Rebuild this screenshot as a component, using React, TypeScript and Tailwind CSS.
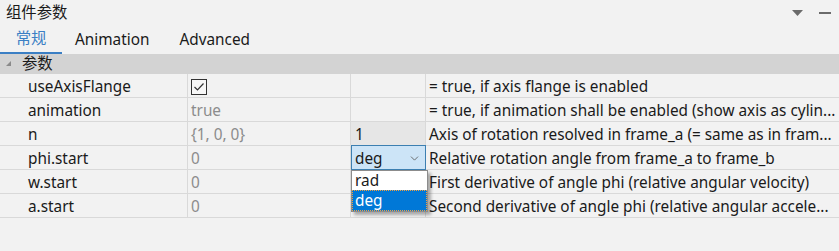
import { ChevronDown } from 'lucide-react'

type Row = {
  name: string
  value?: string
  unit?: string
  desc: string
  check?: boolean
  unitBg?: boolean
  dropdown?: boolean
}

const ROWS: Row[] = [
  { name: 'useAxisFlange', check: true, desc: '= true, if axis flange is enabled' },
  { name: 'animation', value: 'true', desc: '= true, if animation shall be enabled (show axis as cylin...' },
  { name: 'n', value: '{1, 0, 0}', unit: '1', unitBg: true, desc: 'Axis of rotation resolved in frame_a (= same as in fram...' },
  { name: 'phi.start', value: '0', unit: 'deg', dropdown: true, desc: 'Relative rotation angle from frame_a to frame_b' },
  { name: 'w.start', value: '0', desc: 'First derivative of angle phi (relative angular velocity)' },
  { name: 'a.start', value: '0', unit: 'rad/s2', desc: 'Second derivative of angle phi (relative angular accele...' },
]

function CheckBox() {
  return (
    <div className="flex h-[16px] w-[16px] items-center justify-center border border-[#333333] bg-[#f7f7f7]">
      <svg width="12" height="10" viewBox="0 0 12 10">
        <path d="M1.5 5 L4.5 8 L10.5 1.5" fill="none" stroke="#333333" strokeWidth="1.2" />
      </svg>
    </div>
  )
}

export default function App() {
  return (
    <div
      className="relative h-[251px] w-[839px] overflow-hidden bg-[#f2f2f2] text-[15.35px] text-[#1a1a1a]"
      style={{ fontFamily: '"Noto Sans", "Noto Sans CJK SC", sans-serif' }}
    >
      {/* title bar */}
      <div className="flex h-[25px] items-center justify-between pl-[6px] pr-[8px]">
        <span className="leading-none">组件参数</span>
        <div className="flex items-center gap-[16px] pt-[1px]">
          <svg width="11" height="6" viewBox="0 0 11 6">
            <path d="M0 0 H11 L5.5 6 Z" fill="#6b6b6b" />
          </svg>
          <div className="h-[2px] w-[12px] bg-[#6b6b6b]" />
        </div>
      </div>

      {/* tabs */}
      <div className="flex h-[29px] items-stretch">
        <div className="flex w-[62px] items-center justify-center border-b-[2px] border-[#3b7fc4] text-[#3b7fc4]">
          常规
        </div>
        <div className="flex items-center pl-[13px]">Animation</div>
        <div className="flex items-center pl-[30px]">Advanced</div>
      </div>

      {/* group row */}
      <div className="flex h-[20px] items-center bg-[#d3d3d3]">
        <svg className="ml-[5px]" width="7" height="6" viewBox="0 0 7 6">
          <path d="M6 0 L6 5 L1 5 Z" fill="#8a8a8a" />
        </svg>
        <span className="ml-[10px] leading-none">参数</span>
      </div>

      {/* property rows */}
      <div>
        {ROWS.map((r) => (
          <div
            key={r.name}
            className="grid h-[24px] grid-cols-[188px_163px_75px_1fr] border-b border-[#d9d9d9]"
          >
            <div className="flex items-center border-r border-[#d9d9d9] pl-[28px] pt-[1px]">{r.name}</div>
            <div className="flex items-center border-r border-[#d9d9d9] pl-[3px] pt-[1px] text-[#8c8c8c]">
              {r.check ? <CheckBox /> : r.value}
            </div>
            <div className="relative border-r border-[#d9d9d9]">
              {r.dropdown ? (
                <div className="absolute left-0 top-[-1px] flex h-[25px] w-[75px] items-center justify-between border border-[#3c7fb1] bg-[#cce4f7] pl-[3px] pr-[4px] pt-[1px]">
                  <span>deg</span>
                  <ChevronDown className="h-[13px] w-[13px] text-[#555555]" strokeWidth={1.5} />
                </div>
              ) : (
                <div className={`flex h-full items-center pl-[4px] pt-[1px] ${r.unitBg ? 'bg-[#e6e6e6]' : ''}`}>
                  {r.unit}
                </div>
              )}
            </div>
            <div className="flex items-center overflow-hidden whitespace-nowrap pl-[3px] pt-[1px]">{r.desc}</div>
          </div>
        ))}
      </div>

      {/* open dropdown list */}
      <div className="absolute left-[351px] top-[170px] w-[77px] border border-[#8c8c8c] bg-white shadow-[3px_3px_3px_rgba(0,0,0,0.3)]">
        <div className="flex h-[19px] items-center pl-[3px]">rad</div>
        <div className="flex h-[21px] items-center border border-dotted border-[#f0a040] bg-[#0078d7] pl-[2px] text-white">
          deg
        </div>
      </div>
    </div>
  )
}
